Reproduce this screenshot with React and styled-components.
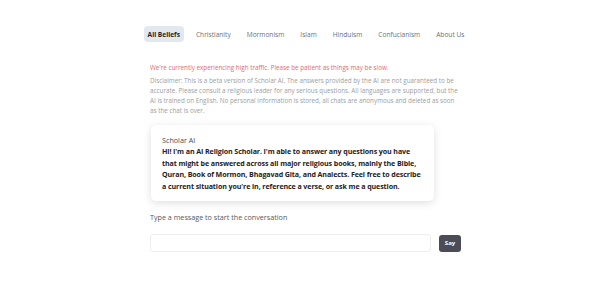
import React, { useState } from "react";
import styled, { createGlobalStyle } from "styled-components";

const GlobalStyle = createGlobalStyle`
  body {
    margin: 0;
    background: #ffffff;
    font-family: "Open Sans", "Noto Sans", sans-serif;
  }
`;

const Page = styled.div`
  width: 611px;
  height: 281px;
  padding-top: 26px;
  box-sizing: border-box;
`;

const Nav = styled.ul`
  list-style: none;
  margin: 0;
  padding: 0 0 0 1px;
  display: flex;
  justify-content: center;
  gap: 8px;
`;

const NavItem = styled.li`
  height: 16px;
  padding: 0 4px;
  display: flex;
  align-items: center;
  border-radius: 4px;
  font-size: 6.6px;
  color: ${(p) => (p.$active ? "#23262b" : "#6b7077")};
  font-weight: ${(p) => (p.$active ? 700 : 400)};
  background: ${(p) => (p.$active ? "#e3e7ef" : "transparent")};
  cursor: pointer;
`;

const Main = styled.div`
  width: 311px;
  margin: 21px auto 0;
`;

const Warning = styled.p`
  margin: 0;
  font-size: 6.3px;
  line-height: 10px;
  color: #e46a72;
`;

const Disclaimer = styled.p`
  margin: 3px 0 0;
  font-size: 6.3px;
  line-height: 10px;
  color: #9b9ea2;
`;

const Card = styled.div`
  margin: 9px 27px 0 1px;
  padding: 10px 11px 9px;
  background: #fff;
  border-radius: 5px;
  box-shadow: 0 2px 8px rgba(0, 0, 0, 0.13);
`;

const Sender = styled.div`
  font-size: 7.2px;
  line-height: 11px;
  color: #4a4d52;
`;

const Message = styled.div`
  font-size: 7.1px;
  line-height: 11.5px;
  font-weight: 700;
  letter-spacing: -0.1px;
  color: #1f2124;
`;

const Prompt = styled.p`
  margin: 10px 0 0;
  font-size: 7.2px;
  line-height: 12px;
  color: #55595e;
`;

const InputRow = styled.form`
  margin-top: 11px;
  display: flex;
  gap: 8px;
  align-items: center;
`;

const TextInput = styled.input`
  flex: 1;
  height: 18px;
  box-sizing: border-box;
  border: 1px solid #eceef1;
  border-radius: 3px;
  font-family: inherit;
  font-size: 7px;
  padding: 0 4px;
  outline: none;
`;

const SayButton = styled.button`
  width: 22px;
  height: 17px;
  padding: 0;
  border: none;
  border-radius: 3px;
  background: #4c4c57;
  color: #fff;
  font-family: inherit;
  font-size: 6px;
  font-weight: 700;
`;

const tabs = [
  "All Beliefs",
  "Christianity",
  "Mormonism",
  "Islam",
  "Hinduism",
  "Confucianism",
  "About Us",
];

export default function App() {
  const [active, setActive] = useState("All Beliefs");
  const [text, setText] = useState("");

  return (
    <Page>
      <GlobalStyle />
      <Nav>
        {tabs.map((t) => (
          <NavItem key={t} $active={t === active} onClick={() => setActive(t)}>
            {t}
          </NavItem>
        ))}
      </Nav>
      <Main>
        <Warning>
          We're currently experiencing high traffic. Please be patient as things may be slow.
        </Warning>
        <Disclaimer>
          Disclaimer: This is a beta version of Scholar AI. The answers provided by the AI are not
          guaranteed to be accurate. Please consult a religious leader for any serious questions.
          All languages are supported, but the AI is trained on English. No personal information is
          stored, all chats are anonymous and deleted as soon as the chat is over.
        </Disclaimer>
        <Card>
          <Sender>Scholar AI</Sender>
          <Message>
            Hi! I'm an AI Religion Scholar. I'm able to answer any questions you have that might be
            answered across all major religious books, mainly the Bible, Quran, Book of Mormon,
            Bhagavad Gita, and Analects. Feel free to describe a current situation you're in,
            reference a verse, or ask me a question.
          </Message>
        </Card>
        <Prompt>Type a message to start the conversation</Prompt>
        <InputRow onSubmit={(e) => e.preventDefault()}>
          <TextInput value={text} onChange={(e) => setText(e.target.value)} />
          <SayButton type="submit">Say</SayButton>
        </InputRow>
      </Main>
    </Page>
  );
}
